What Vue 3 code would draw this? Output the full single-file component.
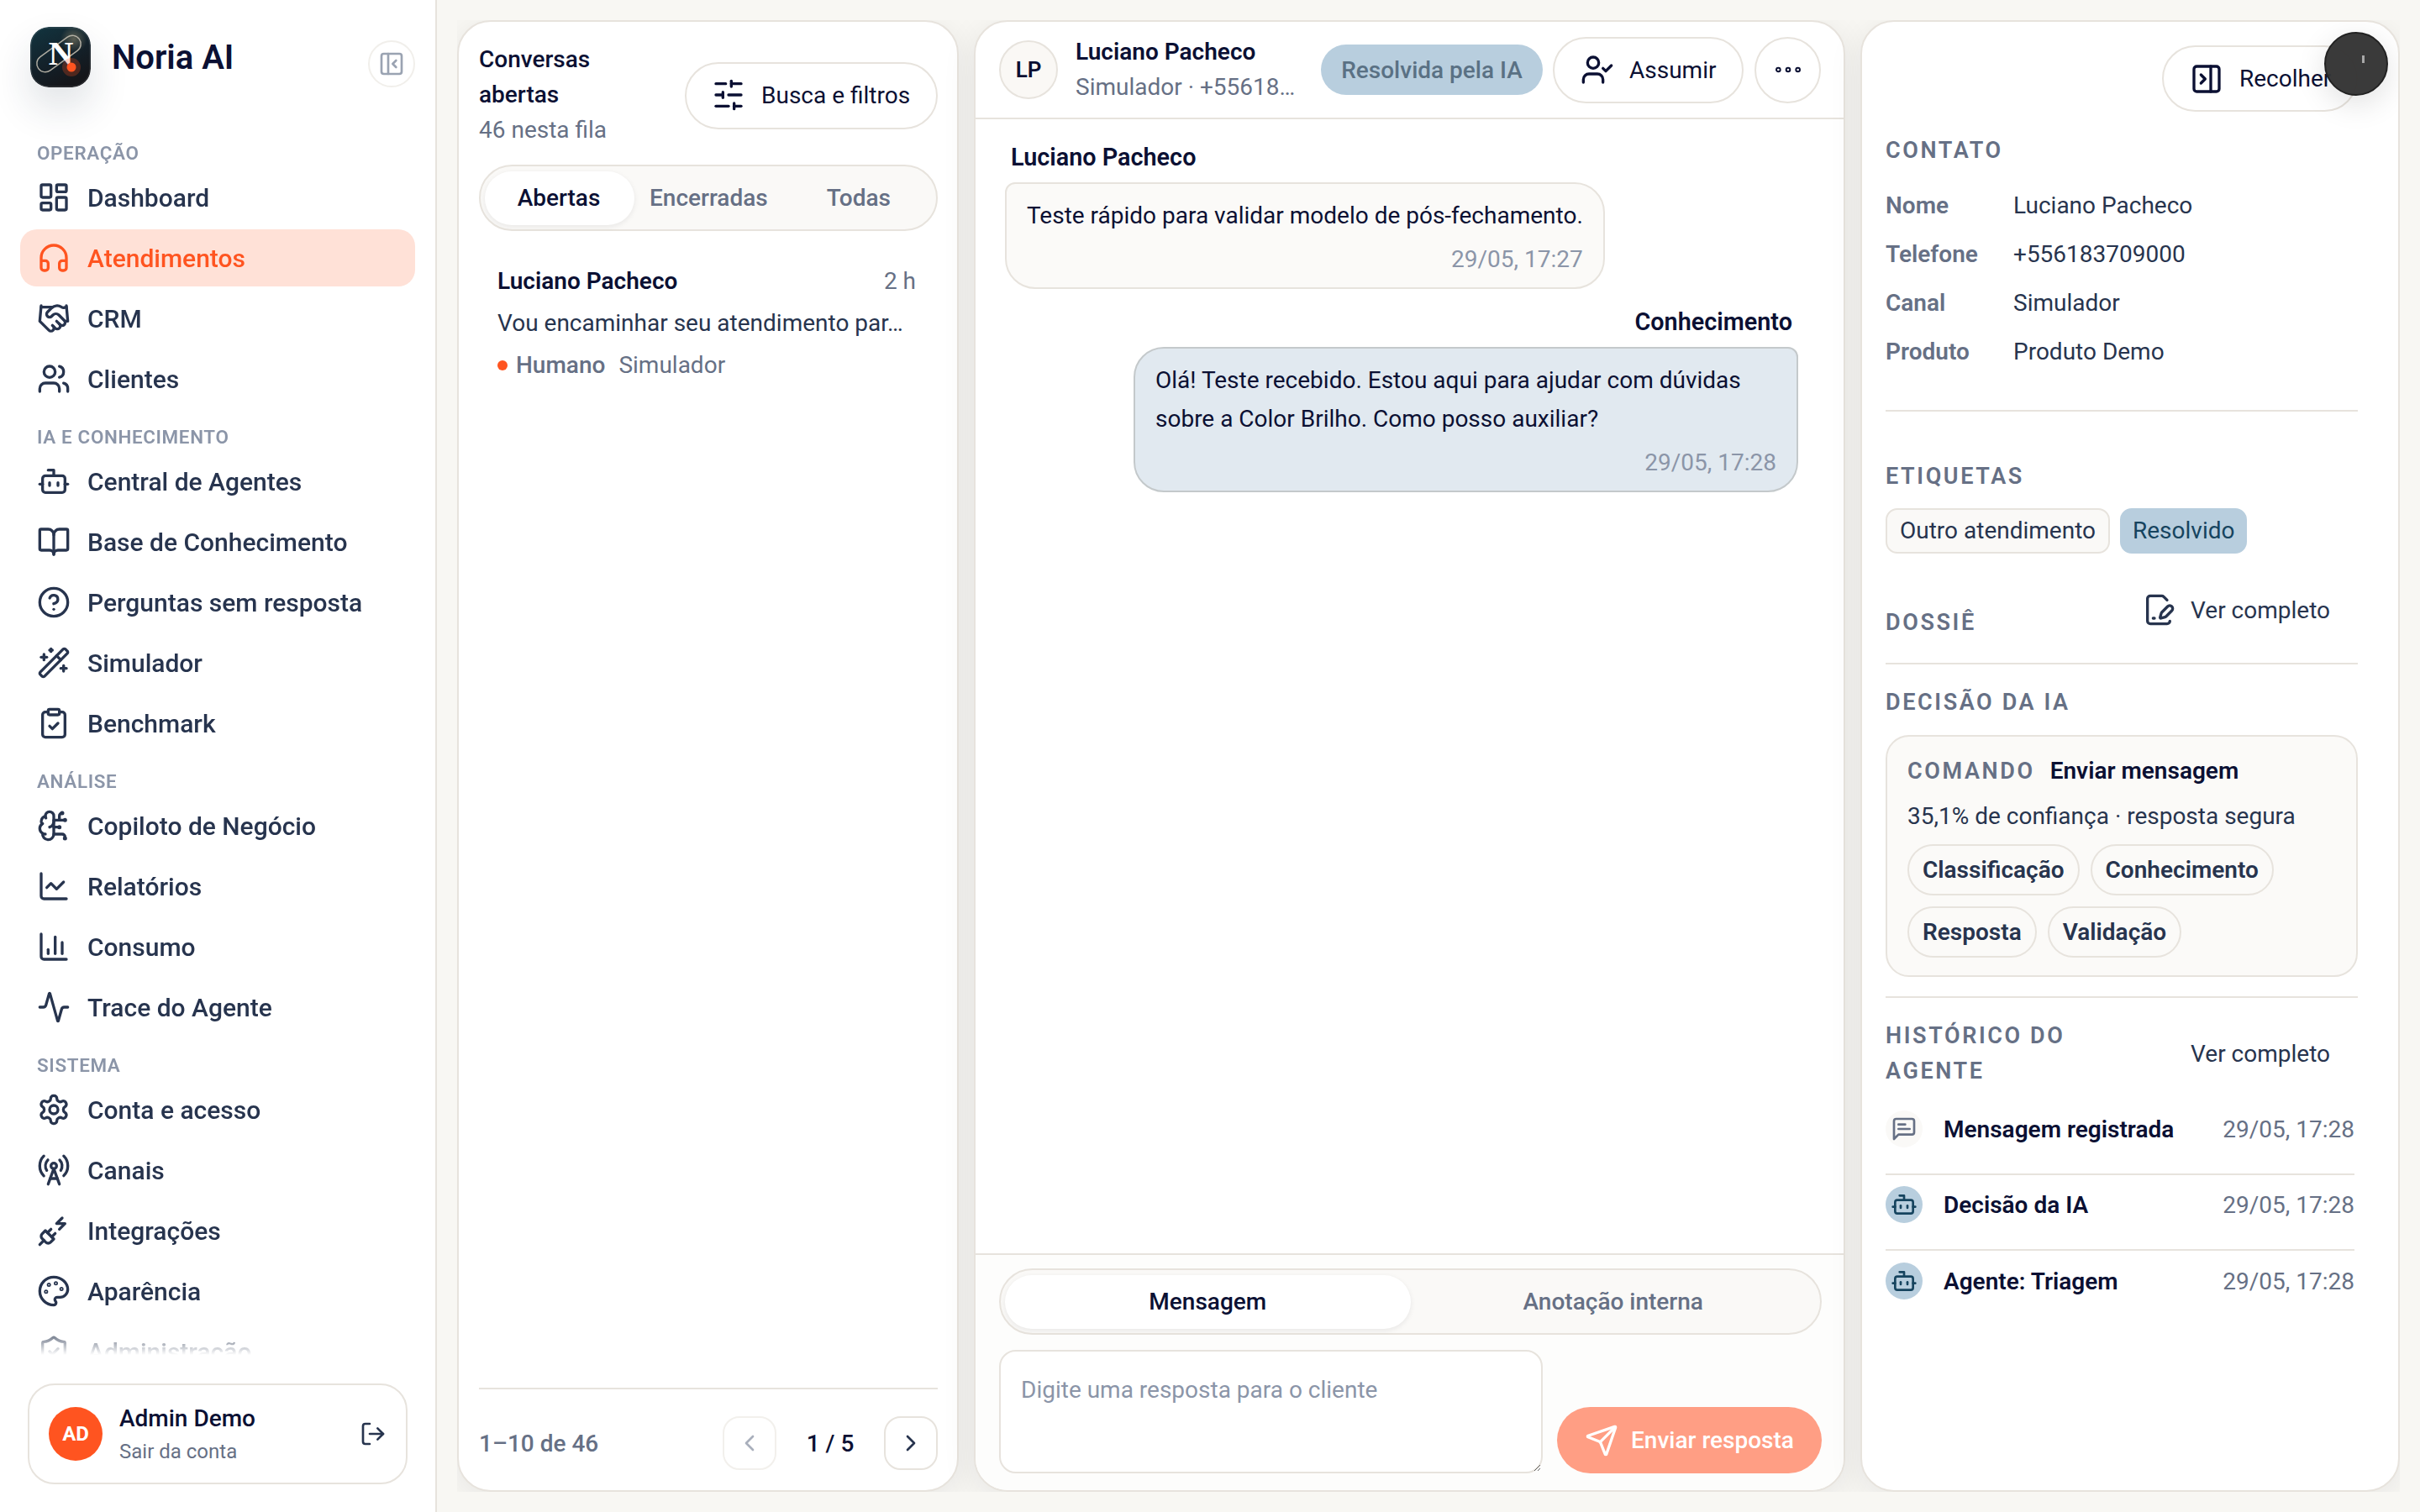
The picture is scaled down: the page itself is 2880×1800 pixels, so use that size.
<script setup>
const r = (x, y, w, h, q) => `M${x + q} ${y}h${w - 2 * q}a${q} ${q} 0 0 1 ${q} ${q}v${h - 2 * q}a${q} ${q} 0 0 1 -${q} ${q}h-${w - 2 * q}a${q} ${q} 0 0 1 -${q} -${q}v-${h - 2 * q}a${q} ${q} 0 0 1 ${q} -${q}z`
const c = (x, y, q) => `M${x - q} ${y}a${q} ${q} 0 1 0 ${2 * q} 0a${q} ${q} 0 1 0 -${2 * q} 0z`

const icons = {
  dashboard: [r(3, 3, 7, 9, 1), r(14, 3, 7, 5, 1), r(14, 12, 7, 9, 1), r(3, 16, 7, 5, 1)],
  headphones: ['M3 14h3a2 2 0 0 1 2 2v3a2 2 0 0 1-2 2H5a2 2 0 0 1-2-2v-7a9 9 0 0 1 18 0v7a2 2 0 0 1-2 2h-1a2 2 0 0 1-2-2v-3a2 2 0 0 1 2-2h3'],
  handshake: ['m11 17 2 2a1 1 0 1 0 3-3', 'm14 14 2.5 2.5a1 1 0 1 0 3-3l-3.88-3.88a3 3 0 0 0-4.24 0l-.88.88a1 1 0 1 1-3-3l2.81-2.81a5.79 5.79 0 0 1 7.06-.87l.47.28a2 2 0 0 0 1.42.25L21 4', 'm21 3 1 11h-2', 'M3 3 2 14l6.5 6.5a1 1 0 1 0 3-3', 'M3 4h8'],
  users: ['M16 21v-2a4 4 0 0 0-4-4H6a4 4 0 0 0-4 4v2', c(9, 7, 4), 'M22 21v-2a4 4 0 0 0-3-3.87', 'M16 3.13a4 4 0 0 1 0 7.75'],
  bot: ['M12 8V4H8', r(4, 8, 16, 12, 2), 'M2 14h2', 'M20 14h2', 'M15 13v2', 'M9 13v2'],
  book: ['M12 7v14', 'M3 18a1 1 0 0 1-1-1V4a1 1 0 0 1 1-1h5a4 4 0 0 1 4 4 4 4 0 0 1 4-4h5a1 1 0 0 1 1 1v13a1 1 0 0 1-1 1h-6a3 3 0 0 0-3 3 3 3 0 0 0-3-3z'],
  help: [c(12, 12, 10), 'M9.09 9a3 3 0 0 1 5.83 1c0 2-3 3-3 3', 'M12 17h.01'],
  wand: ['m21.64 3.64-1.28-1.28a1.21 1.21 0 0 0-1.72 0L2.36 18.64a1.21 1.21 0 0 0 0 1.72l1.28 1.28a1.2 1.2 0 0 0 1.72 0L21.64 5.36a1.2 1.2 0 0 0 0-1.72', 'm14 7 3 3', 'M5 6v4', 'M19 14v4', 'M10 2v2', 'M7 8H3', 'M21 16h-4', 'M11 3H9'],
  clipboard: [r(8, 2, 8, 4, 1), 'M16 4h2a2 2 0 0 1 2 2v14a2 2 0 0 1-2 2H6a2 2 0 0 1-2-2V6a2 2 0 0 1 2-2h2', 'm9 14 2 2 4-4'],
  brain: ['M12 5a3 3 0 1 0-5.997.125 4 4 0 0 0-2.526 5.77 4 4 0 0 0 .556 6.588A4 4 0 1 0 12 18Z', 'M9 13a4.5 4.5 0 0 0 3-4', 'M6.003 5.125A3 3 0 0 0 6.401 6.5', 'M3.477 10.896a4 4 0 0 1 .585-.396', 'M6 18a4 4 0 0 1-1.967-.516', 'M12 13h4', 'M12 18h6a2 2 0 0 1 2 2v1', 'M12 8h8', 'M16 8V5a2 2 0 0 1 2-2', c(16, 13, 0.5), c(18, 3, 0.5), c(20, 21, 0.5), c(20, 8, 0.5)],
  line: ['M3 3v16a2 2 0 0 0 2 2h16', 'm19 9-5 5-4-4-3 3'],
  bars: ['M3 3v16a2 2 0 0 0 2 2h16', 'M18 17V9', 'M13 17V5', 'M8 17v-3'],
  activity: ['M22 12h-2.48a2 2 0 0 0-1.93 1.46l-2.35 8.36a.25.25 0 0 1-.48 0L9.24 2.18a.25.25 0 0 0-.48 0l-2.35 8.36A2 2 0 0 1 4.49 12H2'],
  settings: ['M12.22 2h-.44a2 2 0 0 0-2 2v.18a2 2 0 0 1-1 1.73l-.43.25a2 2 0 0 1-2 0l-.15-.08a2 2 0 0 0-2.73.73l-.22.38a2 2 0 0 0 .73 2.73l.15.1a2 2 0 0 1 1 1.72v.51a2 2 0 0 1-1 1.74l-.15.09a2 2 0 0 0-.73 2.73l.22.38a2 2 0 0 0 2.73.73l.15-.08a2 2 0 0 1 2 0l.43.25a2 2 0 0 1 1 1.73V20a2 2 0 0 0 2 2h.44a2 2 0 0 0 2-2v-.18a2 2 0 0 1 1-1.73l.43-.25a2 2 0 0 1 2 0l.15.08a2 2 0 0 0 2.73-.73l.22-.39a2 2 0 0 0-.73-2.73l-.15-.08a2 2 0 0 1-1-1.74v-.5a2 2 0 0 1 1-1.74l.15-.09a2 2 0 0 0 .73-2.73l-.22-.38a2 2 0 0 0-2.73-.73l-.15.08a2 2 0 0 1-2 0l-.43-.25a2 2 0 0 1-1-1.73V4a2 2 0 0 0-2-2z', c(12, 12, 3)],
  tower: ['M4.9 16.1C1 12.2 1 5.8 4.9 1.9', 'M7.8 4.7a6.14 6.14 0 0 0-.8 7.5', c(12, 9, 2), 'M16.2 4.8c2 2 2.26 5.11.8 7.47', 'M19.1 1.9a9.96 9.96 0 0 1 0 14.1', 'M9.5 18h5', 'm8 22 4-11 4 11'],
  plug: ['M6.3 20.3a2.4 2.4 0 0 0 3.4 0L12 18l-6-6-2.3 2.3a2.4 2.4 0 0 0 0 3.4Z', 'm2 22 3-3', 'M7.5 13.5 10 11', 'M10.5 16.5 13 14', 'm18 3-4 4h6l-4 4'],
  palette: [c(13.5, 6.5, 0.5), c(17.5, 10.5, 0.5), c(8.5, 7.5, 0.5), c(6.5, 12.5, 0.5), 'M12 2C6.5 2 2 6.5 2 12s4.5 10 10 10c.926 0 1.648-.746 1.648-1.688 0-.437-.18-.835-.437-1.125-.29-.289-.438-.652-.438-1.125a1.64 1.64 0 0 1 1.668-1.668h1.996c3.051 0 5.555-2.503 5.555-5.554C21.965 6.012 17.461 2 12 2z'],
  shield: ['M20 13c0 5-3.5 7.5-7.66 8.95a1 1 0 0 1-.67-.01C7.5 20.5 4 18 4 13V6a1 1 0 0 1 1-1c2 0 4.5-1.2 6.24-2.72a1.17 1.17 0 0 1 1.52 0C14.51 3.81 17 5 19 5a1 1 0 0 1 1 1z', 'm9 12 2 2 4-4'],
  logout: ['M9 21H5a2 2 0 0 1-2-2V5a2 2 0 0 1 2-2h4', 'm16 17 5-5-5-5', 'M21 12H9'],
  panelLeft: [r(3, 3, 18, 18, 2), 'M9 3v18', 'm16 15-3-3 3-3'],
  panelRight: [r(3, 3, 18, 18, 2), 'M15 3v18', 'm8 9 3 3-3 3'],
  sliders: ['M21 4h-7', 'M10 4H3', 'M21 12h-9', 'M8 12H3', 'M21 20h-5', 'M12 20H3', 'M14 2v4', 'M8 10v4', 'M16 18v4'],
  userCheck: ['M16 21v-2a4 4 0 0 0-4-4H6a4 4 0 0 0-4 4v2', c(9, 7, 4), 'm16 11 2 2 4-4'],
  dots: [c(5, 12, 0.6), c(12, 12, 0.6), c(19, 12, 0.6)],
  send: ['M14.536 21.686a.5.5 0 0 0 .937-.024l6.5-19a.496.496 0 0 0-.635-.635l-19 6.5a.5.5 0 0 0-.024.937l7.93 3.18a2 2 0 0 1 1.112 1.11z', 'm21.854 2.147-10.94 10.939'],
  filePen: ['m18 5-2.414-2.414A2 2 0 0 0 14.172 2H6a2 2 0 0 0-2 2v16a2 2 0 0 0 2 2h12a2 2 0 0 0 2-2', 'M21.378 12.626a1 1 0 0 0-3.004-3.004l-4.01 4.012a2 2 0 0 0-.506.854l-.837 2.87a.5.5 0 0 0 .62.62l2.87-.837a2 2 0 0 0 .854-.506z', 'M8 18h1'],
  message: ['M21 15a2 2 0 0 1-2 2H7l-4 4V5a2 2 0 0 1 2-2h14a2 2 0 0 1 2 2z', 'M13 8H7', 'M17 12H7'],
  left: ['m15 18-6-6 6-6'],
  right: ['m9 18 6-6-6-6'],
}

const nav = [
  { title: 'OPERAÇÃO', items: [
    { label: 'Dashboard', icon: 'dashboard' },
    { label: 'Atendimentos', icon: 'headphones', active: true },
    { label: 'CRM', icon: 'handshake' },
    { label: 'Clientes', icon: 'users' },
  ] },
  { title: 'IA E CONHECIMENTO', items: [
    { label: 'Central de Agentes', icon: 'bot' },
    { label: 'Base de Conhecimento', icon: 'book' },
    { label: 'Perguntas sem resposta', icon: 'help' },
    { label: 'Simulador', icon: 'wand' },
    { label: 'Benchmark', icon: 'clipboard' },
  ] },
  { title: 'ANÁLISE', items: [
    { label: 'Copiloto de Negócio', icon: 'brain' },
    { label: 'Relatórios', icon: 'line' },
    { label: 'Consumo', icon: 'bars' },
    { label: 'Trace do Agente', icon: 'activity' },
  ] },
  { title: 'SISTEMA', items: [
    { label: 'Conta e acesso', icon: 'settings' },
    { label: 'Canais', icon: 'tower' },
    { label: 'Integrações', icon: 'plug' },
    { label: 'Aparência', icon: 'palette' },
    { label: 'Administração', icon: 'shield' },
  ] },
]

const contact = [
  ['Nome', 'Luciano Pacheco'],
  ['Telefone', '+556183709000'],
  ['Canal', 'Simulador'],
  ['Produto', 'Produto Demo'],
]

const history = [
  { label: 'Mensagem registrada', icon: 'message', tone: 'plain' },
  { label: 'Decisão da IA', icon: 'bot', tone: 'blue' },
  { label: 'Agente: Triagem', icon: 'bot', tone: 'blue' },
]
</script>

<template>
  <div class="app">
    <aside class="sidebar">
      <div class="brand">
        <svg class="logo" viewBox="0 0 72 72">
          <defs>
            <linearGradient id="lg" x1="0" y1="0" x2="0.5" y2="1">
              <stop offset="0" stop-color="#123540" />
              <stop offset="0.6" stop-color="#13212a" />
              <stop offset="1" stop-color="#15161a" />
            </linearGradient>
            <radialGradient id="lh" cx="0.72" cy="0.2" r="0.22">
              <stop offset="0" stop-color="#8a8268" stop-opacity="0.6" />
              <stop offset="1" stop-color="#8a8268" stop-opacity="0" />
            </radialGradient>
          </defs>
          <rect width="72" height="72" rx="22" fill="url(#lg)" />
          <rect width="72" height="72" rx="22" fill="url(#lh)" />
          <rect x="1" y="1" width="70" height="70" rx="21" fill="none" stroke="#ffffff" stroke-opacity="0.1" stroke-width="1.5" />
          <rect x="4" y="22" width="60" height="20" rx="10" transform="rotate(-36 34 32)" fill="none" stroke="#c9c3b5" stroke-opacity="0.85" stroke-width="1.5" />
          <text x="36.5" y="45" text-anchor="middle" class="logo-n">N</text>
          <circle cx="49" cy="48" r="11" fill="#ff5420" opacity="0.25" />
          <circle cx="49" cy="48" r="5.5" fill="#ff5420" />
        </svg>
        <span class="brand-name">Noria AI</span>
        <button class="collapse">
          <svg class="ic ic-32" viewBox="0 0 24 24"><path v-for="d in icons.panelLeft" :key="d" :d="d" /></svg>
        </button>
      </div>

      <nav class="nav">
        <section v-for="group in nav" :key="group.title" class="nav-group">
          <h4 class="nav-title">{{ group.title }}</h4>
          <a v-for="item in group.items" :key="item.label" class="nav-item" :class="{ active: item.active }">
            <svg class="ic ic-40" viewBox="0 0 24 24"><path v-for="d in icons[item.icon]" :key="d" :d="d" /></svg>
            <span>{{ item.label }}</span>
          </a>
        </section>
      </nav>

      <div class="user-card">
        <span class="user-avatar">AD</span>
        <div class="user-text">
          <strong>Admin Demo</strong>
          <small>Sair da conta</small>
        </div>
        <svg class="ic ic-32" viewBox="0 0 24 24"><path v-for="d in icons.logout" :key="d" :d="d" /></svg>
      </div>
    </aside>

    <main class="main">
      <div class="panels">
        <section class="panel list-panel">
          <header class="list-head">
            <div class="list-title">
              <h2>Conversas abertas</h2>
              <p>46 nesta fila</p>
            </div>
            <button class="pill-btn filter-btn">
              <svg class="ic ic-40" viewBox="0 0 24 24"><path v-for="d in icons.sliders" :key="d" :d="d" /></svg>
              Busca e filtros
            </button>
          </header>

          <div class="tabs">
            <span class="tab on">Abertas</span>
            <span class="tab t2">Encerradas</span>
            <span class="tab t3">Todas</span>
          </div>

          <article class="conv">
            <div class="conv-top"><strong>Luciano Pacheco</strong><span>2 h</span></div>
            <p class="conv-preview">Vou encaminhar seu atendimento par…</p>
            <div class="conv-meta"><i class="dot"></i><b>Humano</b><span>Simulador</span></div>
          </article>

          <footer class="pager">
            <span class="pager-range">1–10 de 46</span>
            <div class="pager-nav">
              <button class="page-btn off">
                <svg class="ic ic-32" viewBox="0 0 24 24"><path v-for="d in icons.left" :key="d" :d="d" /></svg>
              </button>
              <span class="page-num">1 / 5</span>
              <button class="page-btn">
                <svg class="ic ic-32" viewBox="0 0 24 24"><path v-for="d in icons.right" :key="d" :d="d" /></svg>
              </button>
            </div>
          </footer>
        </section>

        <section class="panel chat-panel">
          <header class="chat-head">
            <span class="lp">LP</span>
            <div class="chat-who">
              <strong>Luciano Pacheco</strong>
              <span>Simulador · +55618…</span>
            </div>
            <span class="status">Resolvida pela IA</span>
            <button class="pill-btn assume">
              <svg class="ic ic-40" viewBox="0 0 24 24"><path v-for="d in icons.userCheck" :key="d" :d="d" /></svg>
              Assumir
            </button>
            <button class="more">
              <svg class="ic ic-40 thick" viewBox="0 0 24 24"><path v-for="d in icons.dots" :key="d" :d="d" /></svg>
            </button>
          </header>

          <div class="messages">
            <div class="msg">
              <div class="msg-author">Luciano Pacheco</div>
              <div class="bubble in">
                <p>Teste rápido para validar modelo de pós-fechamento.</p>
                <time>29/05, 17:27</time>
              </div>
            </div>
            <div class="msg out">
              <div class="msg-author">Conhecimento</div>
              <div class="bubble outb">
                <p>Olá! Teste recebido. Estou aqui para ajudar com dúvidas sobre a Color Brilho. Como posso auxiliar?</p>
                <time>29/05, 17:28</time>
              </div>
            </div>
          </div>

          <footer class="composer">
            <div class="seg">
              <span class="seg-item on">Mensagem</span>
              <span class="seg-item">Anotação interna</span>
            </div>
            <div class="compose-row">
              <textarea class="input" placeholder="Digite uma resposta para o cliente"></textarea>
              <button class="send">
                <svg class="ic ic-40" viewBox="0 0 24 24"><path v-for="d in icons.send" :key="d" :d="d" /></svg>
                Enviar resposta
              </button>
            </div>
          </footer>
        </section>

        <section class="panel info-panel">
          <div class="collapse-row">
            <button class="pill-btn recolher">
              <svg class="ic ic-40" viewBox="0 0 24 24"><path v-for="d in icons.panelRight" :key="d" :d="d" /></svg>
              Recolher
            </button>
          </div>

          <div class="block contact">
            <h5 class="eyebrow">CONTATO</h5>
            <dl>
              <div v-for="row in contact" :key="row[0]" class="field">
                <dt>{{ row[0] }}</dt>
                <dd>{{ row[1] }}</dd>
              </div>
            </dl>
          </div>

          <div class="block tags-block">
            <h5 class="eyebrow">ETIQUETAS</h5>
            <div class="tags">
              <span class="tag">Outro atendimento</span>
              <span class="tag blue">Resolvido</span>
            </div>
          </div>

          <div class="block dossier">
            <h5 class="eyebrow">DOSSIÊ</h5>
            <a class="link">
              <svg class="ic ic-40" viewBox="0 0 24 24"><path v-for="d in icons.filePen" :key="d" :d="d" /></svg>
              Ver completo
            </a>
          </div>

          <div class="block decision">
            <h5 class="eyebrow">DECISÃO DA IA</h5>
            <div class="decision-card">
              <div class="cmd"><span class="eyebrow">COMANDO</span><strong>Enviar mensagem</strong></div>
              <p class="conf">35,1% de confiança · resposta segura</p>
              <div class="chips">
                <span class="chip">Classificação</span>
                <span class="chip">Conhecimento</span>
                <span class="chip">Resposta</span>
                <span class="chip">Validação</span>
              </div>
            </div>
          </div>

          <div class="history">
            <div class="history-head">
              <h5 class="eyebrow">HISTÓRICO DO AGENTE</h5>
              <a class="link">Ver completo</a>
            </div>
            <div v-for="row in history" :key="row.label" class="h-row">
              <span class="h-ic" :class="row.tone">
                <svg class="ic ic-32" viewBox="0 0 24 24"><path v-for="d in icons[row.icon]" :key="d" :d="d" /></svg>
              </span>
              <strong>{{ row.label }}</strong>
              <time>29/05, 17:28</time>
            </div>
          </div>

          <div class="floater"><i></i></div>
        </section>
      </div>
    </main>
  </div>
</template>

<style>
html, body { margin: 0; background: #f8f7f3; }
</style>

<style scoped>
* { box-sizing: border-box; }
.app {
  width: 2880px;
  height: 1800px;
  display: flex;
  font-family: Roboto, "Noto Sans", sans-serif;
  font-size: 28px;
  color: #27344e;
  background: #f8f7f3;
  overflow: hidden;
}
button { font: inherit; color: inherit; background: none; cursor: pointer; }
h2, h4, h5, p, dl, dd, dt { margin: 0; font: inherit; }
.ic { fill: none; stroke: currentColor; stroke-width: 2; stroke-linecap: round; stroke-linejoin: round; flex: none; display: block; }
.ic-32 { width: 32px; height: 32px; }
.ic-40 { width: 40px; height: 40px; }
.thick { stroke-width: 2.8; }

/* sidebar */
.sidebar {
  width: 520px;
  flex: none;
  background: #fff;
  border-right: 2px solid #e7e3dd;
  display: flex;
  flex-direction: column;
  padding: 32px 24px 33px;
}
.brand { display: flex; height: 135px; flex: none; align-items: flex-start; padding-left: 12px; }
.logo { width: 72px; height: 72px; border-radius: 22px; box-shadow: 0 24px 48px rgba(30, 50, 70, 0.14); flex: none; }
.logo-n { font-family: "Liberation Serif", serif; font-weight: 700; font-size: 41px; fill: #fff; }
.brand-name { margin-left: 25px; font-size: 40px; font-weight: 600; line-height: 74px; color: #0b1033; }
.collapse {
  margin-left: auto;
  margin-top: 16px;
  width: 56px;
  height: 56px;
  border-radius: 50%;
  border: 2px solid #f1efeb;
  display: flex;
  align-items: center;
  justify-content: center;
  color: #9aa3b2;
  padding: 0;
}
.nav {
  flex: 1;
  min-height: 0;
  overflow: hidden;
  -webkit-mask-image: linear-gradient(to bottom, #000 calc(100% - 36px), transparent 100%);
  mask-image: linear-gradient(to bottom, #000 calc(100% - 36px), transparent 100%);
}
.nav-group { display: flex; flex-direction: column; gap: 4px; margin-bottom: 20px; }
.nav-title { height: 30px; line-height: 30px; font-size: 22.4px; font-weight: 600; letter-spacing: 0.65px; color: #8b95a8; padding-left: 20px; }
.nav-item {
  height: 68px;
  flex: none;
  display: flex;
  align-items: center;
  gap: 20px;
  padding: 0 20px;
  border-radius: 20px;
  font-size: 30px;
  font-weight: 500;
  color: #27344e;
}
.nav-item.active { background: #ffe1d7; color: #ff5420; }
.user-card {
  margin: 34px 9px 0;
  height: 120px;
  flex: none;
  border: 2px solid #e7e3dd;
  border-radius: 32px;
  display: flex;
  align-items: center;
  padding: 0 23px;
  gap: 20px;
}
.user-avatar {
  width: 64px;
  height: 64px;
  border-radius: 50%;
  background: #ff5420;
  color: #fff;
  font-size: 24px;
  font-weight: 700;
  display: flex;
  align-items: center;
  justify-content: center;
  flex: none;
}
.user-text { flex: 1; display: flex; flex-direction: column; gap: 4px; padding-top: 2px; }
.user-text strong { font-size: 28px; font-weight: 500; color: #0b1033; line-height: 36px; }
.user-text small { font-size: 24px; color: #667085; line-height: 34px; }

/* main */
.main { flex: 1; min-width: 0; padding: 24px; }
.panels {
  height: 100%;
  display: grid;
  grid-template-columns: 597px 1fr 642px;
  gap: 18px;
  overflow: hidden;
}
.panel {
  background: #fff;
  border: 2px solid #e7e3dd;
  border-radius: 40px;
  box-shadow: 0 8px 40px rgba(20, 30, 40, 0.08);
  display: flex;
  flex-direction: column;
  min-height: 0;
  position: relative;
  overflow: hidden;
}
.pill-btn {
  height: 79px;
  border: 2px solid #e7e3dd;
  border-radius: 40px;
  display: inline-flex;
  align-items: center;
  color: #0b1033;
  background: #fff;
  flex: none;
}

/* list panel */
.list-panel { padding: 0 23px 23px 24px; }
.list-head { display: flex; justify-content: space-between; padding-top: 24px; height: 170px; flex: none; }
.list-title { width: 200px; line-height: 42px; }
.list-title h2 { font-weight: 500; color: #0b1033; }
.list-title p { color: #667085; }
.filter-btn { margin-top: 24px; width: 301px; height: 80px; padding: 0 0 2px 30px; gap: 19px; }
.tabs {
  height: 79px;
  flex: none;
  border: 2px solid #e7e3dd;
  border-radius: 40px;
  background: #faf9f7;
  display: flex;
  align-items: center;
  padding: 0 5px;
  font-weight: 500;
  color: #667085;
}
.tab.on {
  width: 178px;
  height: 64px;
  border-radius: 32px;
  background: #fff;
  color: #0b1033;
  box-shadow: 0 2px 6px rgba(20, 30, 40, 0.08);
  display: flex;
  align-items: center;
  justify-content: center;
  padding-right: 2px;
}
.tab.t2 { margin-left: 18px; }
.tab.t3 { margin-left: 70px; }
.conv { padding: 38px 22px 0; flex: 1; min-height: 0; }
.conv-top { display: flex; justify-content: space-between; line-height: 44px; }
.conv-top strong { font-weight: 600; color: #0b1033; }
.conv-top span { color: #667085; margin-right: 4px; }
.conv-preview { margin-top: 6px; line-height: 44px; white-space: nowrap; }
.conv-meta { margin-top: 6px; display: flex; align-items: center; line-height: 44px; color: #667085; }
.dot { width: 12px; height: 12px; border-radius: 50%; background: #ff5420; margin-right: 10px; }
.conv-meta b { font-weight: 500; margin-right: 16px; }
.pager {
  border-top: 2px solid #e7e3dd;
  height: 99px;
  flex: none;
  padding-top: 32px;
  display: flex;
  justify-content: space-between;
  align-items: flex-start;
}
.pager-range { line-height: 65px; color: #667085; font-weight: 500; }
.pager-nav { display: flex; align-items: center; }
.page-btn {
  width: 64px;
  height: 64px;
  border: 2px solid #e7e3dd;
  border-radius: 20px;
  display: flex;
  align-items: center;
  justify-content: center;
  color: #27344e;
  padding: 0;
}
.page-btn.off { border-color: #f2f0ec; color: #a9afbc; }
.page-num { width: 128px; text-align: center; font-weight: 500; color: #0b1033; }

/* chat panel */
.chat-head {
  height: 116px;
  flex: none;
  border-bottom: 2px solid #e7e3dd;
  display: flex;
  align-items: center;
  padding: 0 27px 0 28px;
}
.lp {
  width: 70px;
  height: 70px;
  border-radius: 50%;
  border: 2px solid #e7e3dd;
  background: #faf8f5;
  display: flex;
  align-items: center;
  justify-content: center;
  font-size: 26px;
  font-weight: 600;
  color: #0b1033;
  flex: none;
}
.chat-who { width: 262px; margin-left: 21px; display: flex; flex-direction: column; line-height: 42px; flex: none; }
.chat-who strong { font-weight: 600; color: #0b1033; }
.chat-who span { color: #667085; white-space: nowrap; }
.status {
  margin-left: 30px;
  width: 264px;
  height: 60px;
  flex: none;
  border-radius: 30px;
  background: #b8cede;
  color: #5a7184;
  font-weight: 500;
  display: flex;
  align-items: center;
  justify-content: center;
}
.assume { margin-left: 12px; width: 227px; padding: 0 0 0 31px; gap: 18px; }
.more {
  margin-left: 13px;
  width: 80px;
  height: 79px;
  border-radius: 50%;
  border: 2px solid #e7e3dd;
  display: flex;
  align-items: center;
  justify-content: center;
  padding: 0;
  color: #0b1033;
}
.messages { flex: 1; min-height: 0; padding: 23px 54px 0 35px; display: flex; flex-direction: column; }
.msg-author { font-size: 28.8px; font-weight: 600; color: #0b1033; line-height: 44px; padding-left: 7px; }
.msg { display: flex; flex-direction: column; align-items: flex-start; }
.msg.out { align-items: flex-end; margin-top: 17px; }
.msg.out .msg-author { padding: 0 7px 0 0; }
.bubble { margin-top: 8px; border: 2px solid #e7e3dd; border-radius: 12px 36px 36px 36px; padding: 15px 24px 10px; color: #0b1033; }
.bubble p { line-height: 46px; }
.bubble time { display: block; text-align: right; color: #8b95a8; margin-top: 6px; line-height: 46px; }
.bubble.in { background: #fbfaf8; }
.bubble.in p { white-space: nowrap; }
.bubble.outb { background: #e1e9f0; border-color: #c4c9cb; border-radius: 36px 12px 36px 36px; width: 791px; }
.composer { flex: none; height: 282px; border-top: 2px solid #e7e3dd; padding: 16px 26px 0 28px; background: #fdfdfc; }
.seg {
  height: 79px;
  border: 2px solid #e7e3dd;
  border-radius: 40px;
  background: #faf9f7;
  display: grid;
  grid-template-columns: 1fr 1fr;
  align-items: center;
  padding: 0 5px;
  font-weight: 500;
  color: #667085;
  text-align: center;
}
.seg-item { height: 64px; line-height: 64px; border-radius: 32px; }
.seg-item.on { background: #fff; color: #0b1033; box-shadow: 0 2px 6px rgba(20, 30, 40, 0.08); }
.compose-row { margin-top: 18px; display: flex; align-items: flex-end; gap: 17px; }
.input {
  width: 647px;
  height: 147px;
  flex: none;
  border: 2px solid #e7e3dd;
  border-radius: 20px;
  padding: 28px 24px;
  font: inherit;
  line-height: 36px;
  background: #fff;
  display: block;
  outline: none;
}
.input::placeholder { color: #8b95a8; opacity: 1; }
.send {
  flex: 1;
  height: 79px;
  border: none;
  border-radius: 40px;
  background: #ff9e84;
  color: #fff;
  font-weight: 500;
  display: flex;
  align-items: center;
  justify-content: center;
  gap: 15px;
  padding: 0;
}

/* info panel */
.info-panel { padding: 0 48px 0 28px; overflow: hidden; }
.collapse-row { display: flex; justify-content: flex-end; padding-top: 28px; flex: none; }
.recolher { width: 233px; padding-left: 31px; gap: 19px; line-height: 1; padding-top: 1px; }
.eyebrow { font-size: 27px; font-weight: 600; letter-spacing: 2.6px; color: #667085; line-height: 42px; }
.contact { margin-top: 25px; padding-bottom: 41px; border-bottom: 2px solid #e7e3dd; }
.contact dl { margin-top: 15px; display: flex; flex-direction: column; }
.field { display: flex; height: 58px; align-items: center; }
.field dt { width: 152px; font-weight: 600; color: #667085; }
.tags-block { margin-top: 56px; }
.tags { display: flex; gap: 12px; margin-top: 17px; }
.tag { height: 54px; line-height: 50px; padding: 0 15px; border: 2px solid #e7e3dd; background: #faf9f7; border-radius: 14px; }
.tag.blue { background: #b8cede; border-color: #b8cede; color: #16445f; padding: 0 13px; }
.dossier { display: flex; justify-content: space-between; height: 132px; border-bottom: 2px solid #e7e3dd; padding-top: 41px; position: relative; }
.dossier .eyebrow { padding-top: 20px; }
.link { display: flex; align-items: center; gap: 18px; margin-right: 33px; height: 60px; color: #27344e; }
.dossier .link { margin-top: -4px; }
.decision { padding-top: 24px; padding-bottom: 23px; border-bottom: 2px solid #e7e3dd; }
.decision-card { margin-top: 18px; height: 288px; border: 2px solid #e7e3dd; border-radius: 28px; background: #fbfaf8; padding: 20px 24px; }
.cmd { display: flex; gap: 18px; align-items: center; line-height: 42px; }
.cmd strong { font-weight: 600; color: #0b1033; }
.conf { margin-top: 12px; line-height: 42px; }
.chips { display: flex; flex-wrap: wrap; gap: 13px; margin-top: 12px; }
.chip { height: 61px; line-height: 57px; padding: 0 16px; border: 2px solid #e7e3dd; border-radius: 31px; font-weight: 600; }
.history { padding-top: 24px; }
.history-head { display: flex; justify-content: space-between; align-items: center; margin-bottom: 13px; }
.history-head .eyebrow { width: 330px; }
.h-row { display: flex; align-items: center; width: 558px; height: 90px; padding-bottom: 18px; border-bottom: 2px solid #e7e3dd; }
.h-row:last-child { border-bottom: none; }
.h-ic { width: 44px; height: 44px; border-radius: 50%; display: flex; align-items: center; justify-content: center; flex: none; }
.h-ic.plain { background: #faf9f7; color: #667085; }
.h-ic.blue { background: #b8cede; color: #16445f; }
.h-row strong { margin-left: 25px; font-weight: 600; color: #0b1033; }
.h-row time { margin-left: auto; color: #667085; }
.floater {
  position: absolute;
  top: 12px;
  right: 12px;
  width: 76px;
  height: 76px;
  border-radius: 50%;
  background: rgba(52, 52, 52, 0.97);
  border: 2px solid #222;
  box-shadow: 0 10px 36px rgba(0, 0, 0, 0.12);
}
.floater i { position: absolute; left: 43px; top: 26px; width: 3px; height: 9px; background: #a8a8a8; }
</style>
